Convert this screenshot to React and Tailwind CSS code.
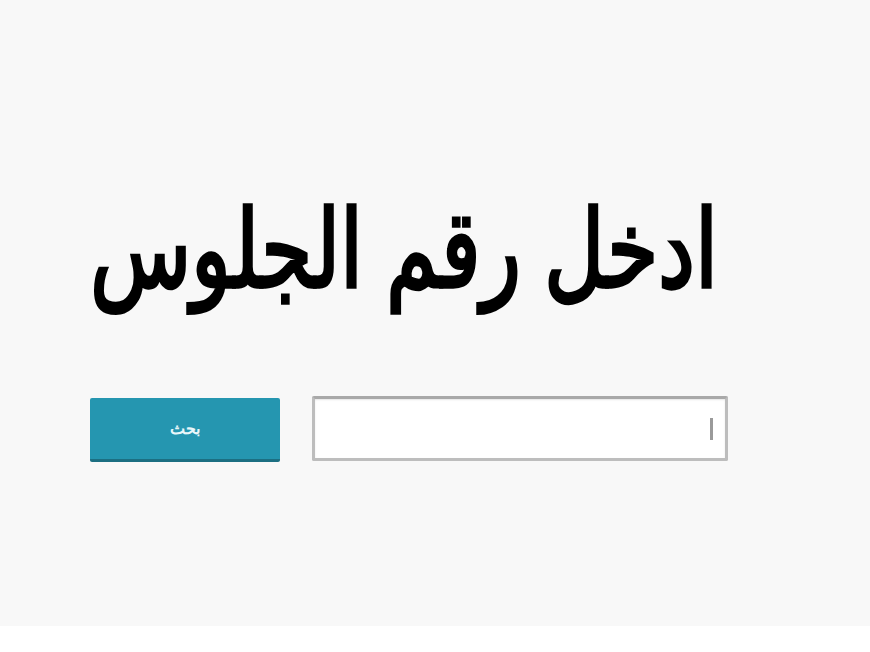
export default function App() {
  return (
    <div
      dir="rtl"
      className="flex h-[652px] w-[870px] flex-col bg-white"
      style={{ fontFamily: '"Liberation Sans", sans-serif' }}
    >
      <div className="flex h-[626px] flex-col bg-[#f8f8f8] pr-[142px] pl-[90px]">
        <h1 className="mt-[186px] origin-center scale-y-[1.3] whitespace-nowrap pr-[10px] text-[83px] font-bold leading-[130px] text-black">
          ادخل رقم الجلوس
        </h1>
        <div className="mt-[80px] flex items-start gap-[32px]">
          <div className="flex h-[65px] flex-1 items-center rounded-[2px] border-[3px] border-[#bdbdbd] border-t-[#a9a9a9] bg-white px-[12px] shadow-[inset_0_1px_2px_rgba(0,0,0,0.1)]">
            <span className="h-[22px] w-[3px] bg-[#9a9a9a]" />
          </div>
          <button className="mt-[2px] flex h-[64px] w-[190px] items-center justify-center rounded-[2px] border-b-[3px] border-[#1c6f82] bg-[#2596b0] text-[16px] font-bold text-[#eaf7fa]">
            بحث
          </button>
        </div>
      </div>
    </div>
  );
}
